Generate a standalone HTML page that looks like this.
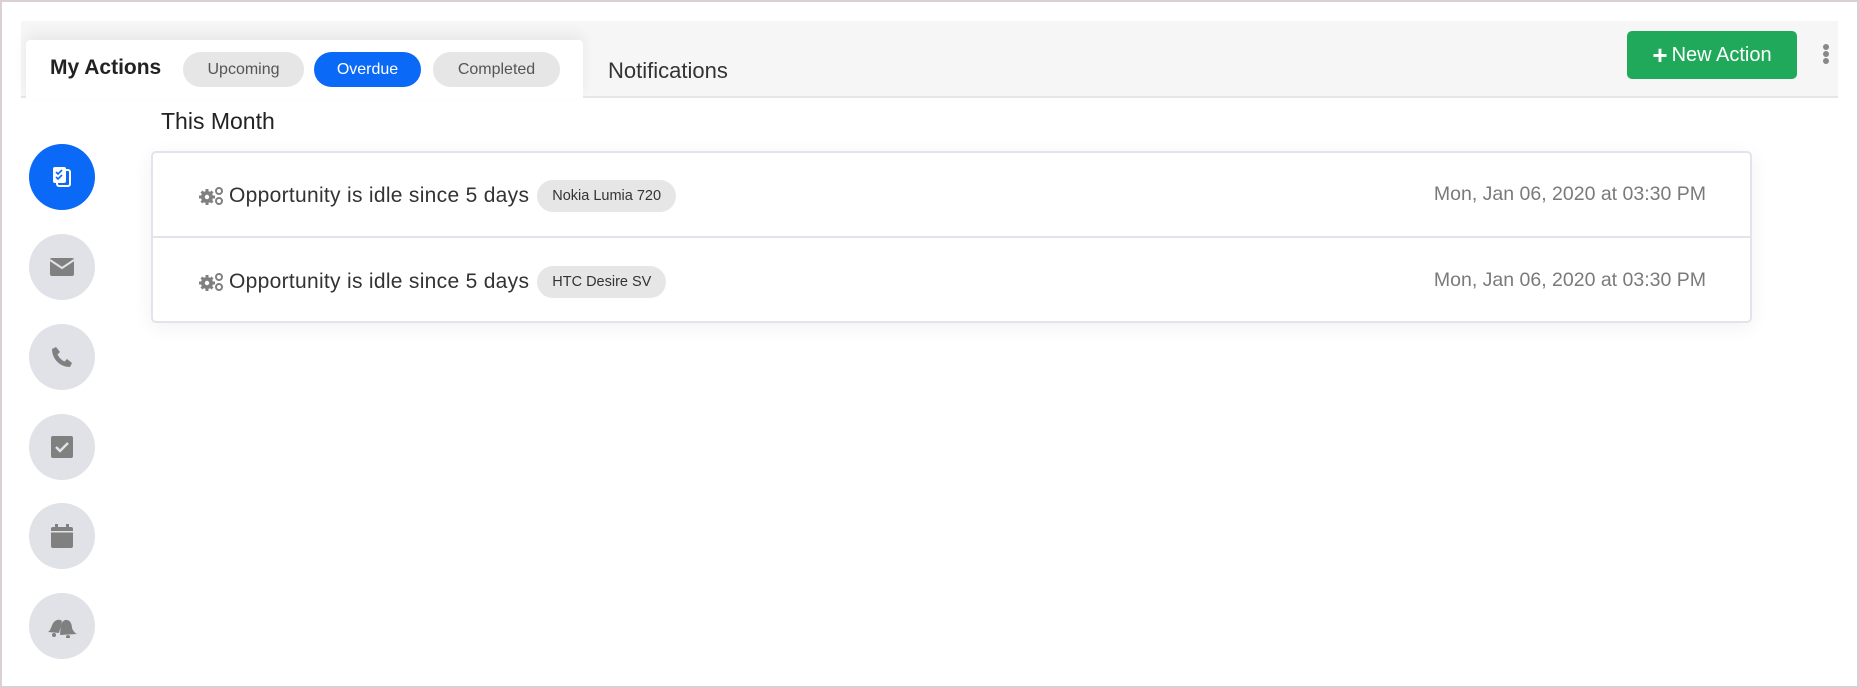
<!DOCTYPE html>
<html><head><meta charset="utf-8"><style>
*{margin:0;padding:0;box-sizing:border-box}
body{width:1859px;height:688px;background:#fff;font-family:"Liberation Sans",sans-serif;position:relative;overflow:hidden}
.frame{position:absolute;left:0;top:0;width:1859px;height:688px;border:2px solid #d8d0d4}
.bar{position:absolute;left:21px;top:21px;width:1817px;height:77px;background:#f6f6f6;border-bottom:2px solid #e4e6ea}
.tab{position:absolute;left:26px;top:40px;width:557px;height:58px;background:#fff;border-radius:4px 4px 0 0;box-shadow:0 -6px 14px rgba(0,0,0,.06)}
.abs{position:absolute}
.pill{position:absolute;top:52px;height:35px;border-radius:18px;background:#e6e6e6;color:#555;font-size:16px;display:flex;align-items:center;justify-content:center}
.circ{position:absolute;left:29px;width:66px;height:66px;border-radius:50%;background:#e1e2e7;display:flex;align-items:center;justify-content:center}
.card{position:absolute;left:151px;top:151px;width:1601px;height:172px;border:2px solid #e1e4ea;border-radius:5px;box-shadow:0 4px 20px rgba(0,0,0,.06);background:#fff}
.row{position:absolute;left:0;width:100%;height:85px}
.txt{position:absolute;left:45px;top:26px;height:33px;font-size:21px;letter-spacing:0.3px;color:#333;display:flex;align-items:center}
.tag{display:inline-block;margin-left:8px;background:#e6e6e6;border-radius:16px;padding:0 15px;height:32px;line-height:32px;font-size:14.5px;letter-spacing:0;color:#333}
.date{position:absolute;right:44px;top:30px;font-size:19.5px;color:#7a7a7a}
</style></head><body>
<div class="frame"></div>
<div class="bar"></div>
<div class="tab"></div>
<div class="abs" style="left:50px;top:56px;font-size:21px;font-weight:bold;color:#222">My Actions</div>
<div class="pill" style="left:183px;width:121px">Upcoming</div>
<div class="pill" style="left:314px;width:107px;background:#0a6af7;color:#fff">Overdue</div>
<div class="pill" style="left:433px;width:127px">Completed</div>
<div class="abs" style="left:608px;top:58px;font-size:22px;color:#333">Notifications</div>
<div class="abs" style="left:1627px;top:31px;width:170px;height:48px;background:#20a95a;border-radius:5px;color:#fff;font-size:20px;display:flex;align-items:center;justify-content:center"><b style="font-size:26px;margin-right:4px">+</b>New Action</div>
<div class="abs" style="left:1823px;top:44px;width:6px"><div style="width:6px;height:6px;border-radius:50%;background:#888;margin-bottom:1px"></div><div style="width:6px;height:6px;border-radius:50%;background:#888;margin-bottom:1px"></div><div style="width:6px;height:6px;border-radius:50%;background:#888"></div></div>
<div class="abs" style="left:161px;top:108px;font-size:23px;color:#222">This Month</div>

<div class="circ" style="top:144px;background:#0a6af7"><svg width="22" height="24" viewBox="0 0 22 24"><rect x="6" y="5" width="13" height="16" rx="2" fill="none" stroke="#fff" stroke-width="2"/><rect x="2" y="2" width="13" height="16" rx="2" fill="#fff"/><path d="M5 7l2 2 4-4M5 12l2 2 4-4" stroke="#0a6af7" stroke-width="1.6" fill="none"/></svg></div>
<div class="circ" style="top:234px"><svg width="24" height="18" viewBox="0 0 24 18"><rect x="0" y="0" width="24" height="18" rx="2" fill="#808080"/><path d="M0 2l12 8 12-8" stroke="#e1e2e7" stroke-width="2" fill="none"/></svg></div>
<div class="circ" style="top:324px"><svg width="24" height="24" viewBox="0 0 24 24"><path d="M6 2l4 5-2.5 2.5c1.5 3 4 5.5 7 7L17 14l5 4-2 4C10 22 2 14 2 4z" fill="#808080"/></svg></div>
<div class="circ" style="top:414px"><svg width="22" height="22" viewBox="0 0 22 22"><rect width="22" height="22" rx="2" fill="#808080"/><path d="M5 11l4 4 8-8" stroke="#e1e2e7" stroke-width="2.5" fill="none"/></svg></div>
<div class="circ" style="top:503px"><svg width="22" height="24" viewBox="0 0 22 24"><rect x="0" y="3" width="22" height="21" rx="2" fill="#808080"/><rect x="4" y="0" width="3" height="6" fill="#808080"/><rect x="15" y="0" width="3" height="6" fill="#808080"/><rect x="0" y="7" width="22" height="1.5" fill="#e1e2e7"/></svg></div>
<div class="circ" style="top:593px"><svg width="32" height="24" viewBox="0 0 32 24"><path d="M2 18c4-2 3-10 9-12 3-1 5 1 5 1l-3 12z" fill="#808080"/><path d="M14 21c1-6-1-12 5-15 5-1 7 4 7 8 1 3 3 5 5 6z" fill="#808080"/><circle cx="8" cy="21" r="2" fill="#808080"/><circle cx="22" cy="23" r="2" fill="#808080"/></svg></div>

<div class="card">
 <div class="row" style="top:0;border-bottom:2px solid #e1e4ea">
  <div class="txt"><svg width="26" height="20" viewBox="0 0 26 20" style="margin-right:5px"><g fill="#808080"><circle cx="9" cy="11" r="6"/><g stroke="#808080" stroke-width="3"><path d="M9 3v16M1 11h16M3.5 5.5l11 11M14.5 5.5l-11 11"/></g><circle cx="9" cy="11" r="2.2" fill="#fff"/></g><g fill="none" stroke="#808080" stroke-width="2"><circle cx="21" cy="5" r="3"/><circle cx="21" cy="15" r="3"/></g></svg>Opportunity is idle since 5 days<span class="tag">Nokia Lumia 720</span></div>
  <div class="date">Mon, Jan 06, 2020 at 03:30 PM</div>
 </div>
 <div class="row" style="top:86px">
  <div class="txt"><svg width="26" height="20" viewBox="0 0 26 20" style="margin-right:5px"><g fill="#808080"><circle cx="9" cy="11" r="6"/><g stroke="#808080" stroke-width="3"><path d="M9 3v16M1 11h16M3.5 5.5l11 11M14.5 5.5l-11 11"/></g><circle cx="9" cy="11" r="2.2" fill="#fff"/></g><g fill="none" stroke="#808080" stroke-width="2"><circle cx="21" cy="5" r="3"/><circle cx="21" cy="15" r="3"/></g></svg>Opportunity is idle since 5 days<span class="tag">HTC Desire SV</span></div>
  <div class="date">Mon, Jan 06, 2020 at 03:30 PM</div>
 </div>
</div>
</body></html>
